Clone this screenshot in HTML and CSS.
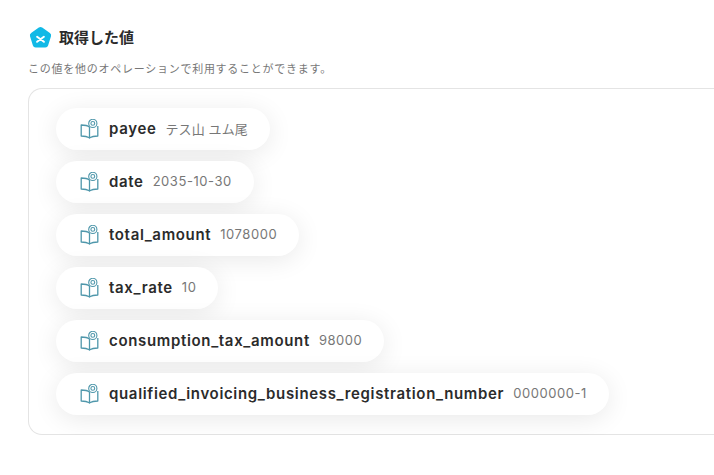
FILE: index.html
```html
<!DOCTYPE html>
<html lang="ja">
<head>
    <meta charset="UTF-8">
    <meta name="viewport" content="width=device-width, initial-scale=1.0">
    <title>取得した値</title>
    <link rel="stylesheet" href="styles.css">
</head>
<body>
    <svg class="icon-defs" width="0" height="0" aria-hidden="true">
        <symbol id="book" viewBox="0 0 20 20">
            <path d="M9.500 8C8 6.800 5 6 1.200 6v11c3.400 0 6.200.5 8.300 1.700 2.100-1.200 4.900-1.700 8.300-1.700V7" fill="none" stroke="#4f97ab" stroke-width="1.300" stroke-linejoin="round"/>
            <path d="M9.500 8v11.600" fill="none" stroke="#4f97ab" stroke-width="1.300"/>
            <circle cx="12.800" cy="4.400" r="4.100" fill="#fff" stroke="#4f97ab" stroke-width="1.100"/>
            <circle cx="12.800" cy="4.400" r="1.900" fill="none" stroke="#4f97ab" stroke-width="1.100"/>
        </symbol>
    </svg>

    <div class="container">
        <!-- Heading -->
        <div class="title-row">
            <svg class="title-icon" viewBox="0 0 24 24" aria-hidden="true">
                <path d="M10.300 1.600a2.900 2.900 0 0 1 3.400 0l7.700 5.500a2.900 2.900 0 0 1 1.100 3.200l-2.900 9.100a2.900 2.900 0 0 1-2.800 2H7.200a2.900 2.900 0 0 1-2.800-2L1.500 10.300a2.900 2.900 0 0 1 1.100-3.200z" fill="#12b9e6"/>
                <path d="M8.600 10.800l6.800 5M15.400 10.800l-6.800 5" stroke="#fff" stroke-width="2" stroke-linecap="round"/>
            </svg>
            <h2>取得した値</h2>
        </div>
        <p class="description">この値を他のオペレーションで利用することができます。</p>

        <!-- Value list -->
        <div class="value-box">
            <div class="chip">
                <svg class="chip-icon" aria-hidden="true"><use href="#book"/></svg>
                <span class="chip-name">payee</span>
                <span class="chip-value chip-value-ja">テス山 ユム尾</span>
            </div>
            <div class="chip">
                <svg class="chip-icon" aria-hidden="true"><use href="#book"/></svg>
                <span class="chip-name">date</span>
                <span class="chip-value">2035-10-30</span>
            </div>
            <div class="chip">
                <svg class="chip-icon" aria-hidden="true"><use href="#book"/></svg>
                <span class="chip-name">total_amount</span>
                <span class="chip-value">1078000</span>
            </div>
            <div class="chip">
                <svg class="chip-icon" aria-hidden="true"><use href="#book"/></svg>
                <span class="chip-name">tax_rate</span>
                <span class="chip-value">10</span>
            </div>
            <div class="chip">
                <svg class="chip-icon" aria-hidden="true"><use href="#book"/></svg>
                <span class="chip-name">consumption_tax_amount</span>
                <span class="chip-value">98000</span>
            </div>
            <div class="chip">
                <svg class="chip-icon" aria-hidden="true"><use href="#book"/></svg>
                <span class="chip-name">qualified_invoicing_business_registration_number</span>
                <span class="chip-value">0000000-1</span>
            </div>
        </div>
    </div>
</body>
</html>
```

FILE: styles.css
```css
/* General Body Styling */
body {
    font-family: Inter, 'Noto Sans CJK JP', sans-serif;
    margin: 0;
    background-color: #fff;
    color: #2b2b2b;
    overflow: hidden;
}

.icon-defs {
    display: block;
    height: 0;
}

.container {
    width: 720px;
    padding: 26px 0 0 28px;
}

/* Heading */
.title-row {
    display: flex;
    align-items: center;
    gap: 6px;
    height: 24px;
}

.title-icon {
    width: 25px;
    height: 24px;
}

h2 {
    margin: 0 0 1px;
    font-size: 15px;
    font-weight: 700;
    line-height: 24px;
}

.description {
    margin: 11px 0 11px;
    font-size: 11px;
    line-height: 16px;
    letter-spacing: 0.74px;
    color: #777;
}

/* Value list */
.value-box {
    display: flex;
    flex-direction: column;
    align-items: flex-start;
    gap: 11px;
    padding: 19px 27px;
    border: 1px solid #e4e4e4;
    border-right: none;
    border-radius: 14px 0 0 14px;
}

.chip {
    display: flex;
    align-items: center;
    height: 42px;
    padding: 0 22px 0 24px;
    background-color: #fff;
    border-radius: 21px;
    box-shadow: 0 4px 26px rgba(0, 0, 0, 0.09);
}

.chip-icon {
    width: 20px;
    height: 20px;
    margin-right: 9px;
}

.chip-name {
    margin-bottom: 2px;
    font-size: 15px;
    font-weight: 600;
    letter-spacing: 0.66px;
}

.chip-value {
    margin: 0 0 2px 9px;
    font-size: 13px;
    color: #777;
    letter-spacing: 0.55px;
}

.chip-value-ja {
    letter-spacing: 0.1px;
}
```
